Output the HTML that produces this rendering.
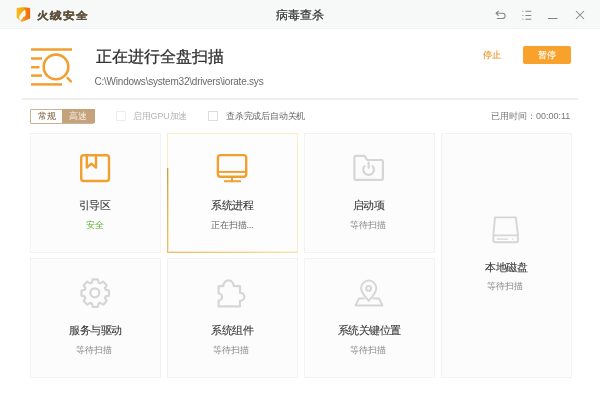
<!DOCTYPE html>
<html><head><meta charset="utf-8">
<style>
*{margin:0;padding:0;box-sizing:border-box}
html,body{width:600px;height:400px;overflow:hidden;background:#fff;font-family:"Liberation Sans",sans-serif;position:relative}
.a{position:absolute;white-space:nowrap}
#tb{left:0;top:0;width:600px;height:29px;background:#f7f8f8;border-bottom:1px solid #f1f2f2}
#brand{left:36.5px;-webkit-text-stroke:0.35px #5f513c;top:7px;font-size:12px;line-height:16px;font-weight:bold;color:#5f513c;letter-spacing:1px;transform:scaleY(0.86);transform-origin:0 13px}
#title{left:276px;top:7px;font-size:12px;line-height:16px;color:#333;-webkit-text-stroke:0.2px #333}
#head{left:95.5px;top:47px;font-size:16px;line-height:20px;color:#333;-webkit-text-stroke:0.3px #333}
#path{left:94.5px;top:76px;font-size:10px;line-height:12px;color:#6a6a6a;letter-spacing:-0.22px}
#stop{left:483px;top:48px;font-size:9px;line-height:14px;color:#ec9626;-webkit-text-stroke:0.15px #ec9626}
#pause{left:523px;top:46px;width:48px;height:18px;background:#f8a12b;border-radius:2px;color:#fff;font-size:9px;line-height:18px;text-align:center;-webkit-text-stroke:0.15px #fff}
#sep{left:22px;top:98px;width:556px;height:2px;background:#eeeeee}
#tog{left:29.5px;top:109px;width:64.5px;height:14.5px;border:1px solid #cbb293;border-radius:1px;background:#fff}
#tog .l{position:absolute;left:0;top:0;width:32px;height:12px;font-size:9px;line-height:12px;text-align:center;color:#7a5b3a}
#tog .r{position:absolute;left:31px;top:-1px;width:33px;height:14px;background:#c4a27c;font-size:9px;line-height:14px;text-align:center;color:#f6efe6}
.cb{width:10px;height:10px;border:1px solid #e3e3e3;background:#fff}
#cb1{left:116px;top:111px;border-color:#ececec}
#cb2{left:208px;top:111px;border-color:#dcdcdc}
#l1{left:133px;top:109px;font-size:9px;letter-spacing:-0.2px;line-height:14px;color:#b5b5b5}
#l2{left:226px;top:109px;font-size:9px;letter-spacing:-0.2px;line-height:14px;color:#666}
#time{left:491px;top:109px;font-size:9px;line-height:14px;color:#777}
.card{position:absolute;border:1px solid #f2f2f2;background:#fcfcfc}
.card .t{position:absolute;left:0;width:100%;text-align:center;font-size:10.5px;line-height:14px;color:#383838;letter-spacing:-0.5px;text-indent:-0.5px;-webkit-text-stroke:0.1px #383838}
.card .s{position:absolute;left:0;width:100%;text-align:center;font-size:9px;line-height:12px;color:#888;text-indent:-3px}
.card svg{position:absolute;left:0;top:0}
.wc{position:absolute;left:0;top:0;width:600px;height:400px;will-change:transform}</style></head><body><div class="wc">
<div class="a" id="tb"></div>
<svg class="a" style="left:12px;top:4px" width="24" height="22" viewBox="0 0 24 22">
 <defs><linearGradient id="sg" x1="0" y1="0" x2="1" y2="0"><stop offset="0" stop-color="#f9bd1c"/><stop offset="0.5" stop-color="#f6a418"/><stop offset="0.62" stop-color="#f2800f"/><stop offset="1" stop-color="#ef6e0e"/></linearGradient></defs>
 <path d="M4.7 4 Q11.5 2.6 18.1 4 L18.1 14.6 L9.6 18 L4.7 13.6 Z" fill="url(#sg)"/>
 <path d="M12.9 5.6 C14 8 14.1 11 12.8 13.4 C12 14.9 10.8 16.3 9.4 17.4 C8 16.2 6.9 14.7 7.2 13 C7.5 11 10 8.4 12.9 5.6 Z" fill="#fffbec"/>
 <path d="M12.6 12.6 C11.8 14.2 10.8 15.5 9.4 16.8" stroke="#e58a22" stroke-width="1.3" fill="none"/>
</svg>
<div class="a" id="brand">火绒安全</div>
<div class="a" id="title">病毒查杀</div>
<!-- window controls -->
<svg class="a" style="left:490px;top:6px" width="100" height="18" viewBox="0 0 100 18" fill="none" stroke="#858585" stroke-width="1.05">
 <path d="M8.6 4.8 L6.1 7.3 L8.6 9.8 M6.1 7.3 H12.5 A2.6 2.6 0 0 1 12.5 12.5 H6.8"/>
 <path d="M32.4 5.3h1 M32.4 9.4h1 M32.4 13.2h1 M35.4 5.3h5.9 M35.4 9.4h5.9 M35.4 13.2h5.9"/>
 <path d="M58 12.5 H67.5"/>
 <path d="M86 5 L94 13 M94 5 L86 13"/>
</svg>
<!-- scan icon -->
<svg class="a" style="left:0;top:0" width="90" height="100" viewBox="0 0 90 100" fill="none" stroke="#f0a030" stroke-width="2.5">
 <path d="M31 49.4 H72"/>
 <path d="M31 58.5 H42"/>
 <path d="M31 67.2 H39.5"/>
 <path d="M31 75.6 H42"/>
 <path d="M31 84.4 H62"/>
 <circle cx="56" cy="66.9" r="12.3" stroke-width="2.6"/>
 <path d="M67.6 78 L70.8 81.4" stroke-linecap="round"/>
</svg>
<div class="a" id="head">正在进行全盘扫描</div>
<div class="a" id="path">C:\Windows\system32\drivers\iorate.sys</div>
<div class="a" id="stop">停止</div>
<div class="a" id="pause">暂停</div>
<div class="a" id="sep"></div>
<div class="a" id="tog"><div class="l">常规</div><div class="r">高速</div></div>
<div class="a cb" id="cb1"></div><div class="a" id="l1">启用GPU加速</div>
<div class="a cb" id="cb2"></div><div class="a" id="l2">查杀完成后自动关机</div>
<div class="a" id="time">已用时间：00:00:11</div>

<!-- cards -->
<div class="card" style="left:30px;top:133px;width:131px;height:120px">
 <div class="t" style="top:64px;text-indent:-2px">引导区</div>
 <div class="s" style="top:85px;color:#5cb030;letter-spacing:0;text-indent:-1px">安全</div>
</div>
<div class="card" style="left:167px;top:133px;width:131px;height:120px;border-color:#fbecc6;background:#fdfdfd">
 <div class="t" style="top:64px">系统进程</div>
 <div class="s" style="top:85px;color:#666;letter-spacing:-0.2px;text-indent:-0.5px">正在扫描...</div>
</div>
<div class="card" style="left:304px;top:133px;width:131px;height:120px">
 <div class="t" style="top:64px;text-indent:-2px">启动项</div>
 <div class="s" style="top:85px">等待扫描</div>
</div>
<div class="card" style="left:441px;top:133px;width:131px;height:245px">
 <div class="t" style="top:126px">本地磁盘</div>
 <div class="s" style="top:146px">等待扫描</div>
</div>
<div class="card" style="left:30px;top:258px;width:131px;height:120px">
 <div class="t" style="top:64px">服务与驱动</div>
 <div class="s" style="top:85px">等待扫描</div>
</div>
<div class="card" style="left:167px;top:258px;width:131px;height:120px">
 <div class="t" style="top:64px">系统组件</div>
 <div class="s" style="top:85px">等待扫描</div>
</div>
<div class="card" style="left:304px;top:258px;width:131px;height:120px">
 <div class="t" style="top:64px">系统关键位置</div>
 <div class="s" style="top:85px">等待扫描</div>
</div>
<div class="a" style="left:167px;top:168px;width:1px;height:85px;background:linear-gradient(to bottom,#c99a50,#e3ae5c 35%,#ecbd70)"></div>
<div class="a" style="left:168px;top:168px;width:1px;height:84px;background:linear-gradient(to bottom,#f6dca0,#fbeab8)"></div>
<div class="a" style="left:167px;top:252px;width:131px;height:1px;background:linear-gradient(to right,#ebbb6e,#f1ca85 50%,#f9e2b5)"></div>
<div class="a" style="left:168px;top:251px;width:129px;height:1px;background:linear-gradient(to right,#fbeab8,#fdf3d6)"></div>
<svg class="a" style="left:0;top:0" width="600" height="400" viewBox="0 0 600 400" fill="none" stroke-linejoin="round">
 <g stroke="#f0a030" stroke-width="2.4">
  <rect x="81.2" y="155.2" width="27.8" height="25.8" rx="2.5"/>
  <path d="M86.8 155.2 V167.5 L91.4 163.8 L96 167.5 V155.2"/>
  <rect x="217.9" y="155.1" width="28.3" height="21.6" rx="2.5"/>
  <path d="M218 171.9 H246" stroke-width="2"/>
  <path d="M232 177 V181 M224 181.2 H241" stroke-width="2"/>
 </g>
 <g stroke="#d6d6d6" stroke-width="2.2">
  <path d="M356 179.9 H381.3 Q382.9 179.9 382.9 178.3 V161.6 Q382.9 160 381.3 160 H367.2 L364.6 155.9 H356 Q354.4 155.9 354.4 157.5 V178.3 Q354.4 179.9 356 179.9 Z"/>
  <path d="M365.2 165.5 A5.3 5.3 0 1 0 372 165.5"/>
  <path d="M368.6 162.6 V167.8" stroke-linecap="round"/>
  <path d="M91.89 282.61 L92.65 279.33 L97.75 279.33 L98.51 282.61 L100.28 283.34 L103.13 281.56 L106.74 285.17 L104.96 288.02 L105.69 289.79 L108.97 290.55 L108.97 295.65 L105.69 296.41 L104.96 298.18 L106.74 301.03 L103.13 304.64 L100.28 302.86 L98.51 303.59 L97.75 306.87 L92.65 306.87 L91.89 303.59 L90.12 302.86 L87.27 304.64 L83.66 301.03 L85.44 298.18 L84.71 296.41 L81.43 295.65 L81.43 290.55 L84.71 289.79 L85.44 288.02 L83.66 285.17 L87.27 281.56 L90.12 283.34 Z"/>
  <circle cx="94.8" cy="292.8" r="4.5"/>
  <path d="M218.6 286.1 H223.32 A5.2 5.2 0 1 1 233.68 286.1 H240 V292.98 A3.9 3.9 0 1 1 240 300.72 V306.4 H218.6 V300.5 A3.5 3.5 0 0 0 218.6 293.5 Z"/>
  <path d="M368.7 300.9 C364.3 296 361.1 292.3 361.1 288.2 A7.6 7.6 0 0 1 376.3 288.2 C376.3 292.3 373.1 296 368.7 300.9 Z" stroke-width="2"/>
  <circle cx="368.6" cy="288.4" r="2.4" stroke-width="2"/>
  <path d="M364.6 298.6 H358.9 L355.6 305.4 H382.4 L379.1 298.6 H372.8" stroke-width="2"/>
  <path d="M495 217.4 H515.8 L517.9 234.5 V241.2 Q517.9 242.2 516.9 242.2 H494.4 Q493.4 242.2 493.4 241.2 V234.5 Z M493.4 235.4 H517.9" stroke-width="1.9"/>
  <path d="M496.8 239.2 H508 M512 239.2 H513.3" stroke-width="1.3"/>
 </g>
</svg>
</div></body></html>
